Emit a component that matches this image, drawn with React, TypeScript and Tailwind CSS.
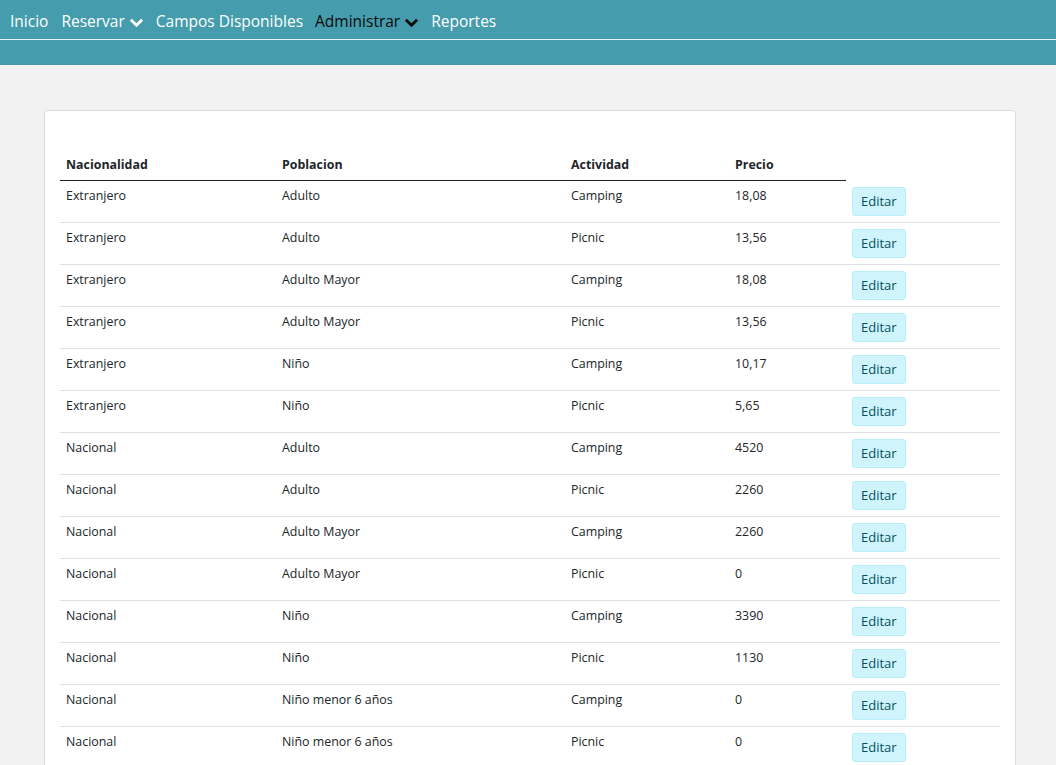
import React from "react";

const rows: [string, string, string, string][] = [
  ["Extranjero", "Adulto", "Camping", "18,08"],
  ["Extranjero", "Adulto", "Picnic", "13,56"],
  ["Extranjero", "Adulto Mayor", "Camping", "18,08"],
  ["Extranjero", "Adulto Mayor", "Picnic", "13,56"],
  ["Extranjero", "Niño", "Camping", "10,17"],
  ["Extranjero", "Niño", "Picnic", "5,65"],
  ["Nacional", "Adulto", "Camping", "4520"],
  ["Nacional", "Adulto", "Picnic", "2260"],
  ["Nacional", "Adulto Mayor", "Camping", "2260"],
  ["Nacional", "Adulto Mayor", "Picnic", "0"],
  ["Nacional", "Niño", "Camping", "3390"],
  ["Nacional", "Niño", "Picnic", "1130"],
  ["Nacional", "Niño menor 6 años", "Camping", "0"],
  ["Nacional", "Niño menor 6 años", "Picnic", "0"],
];

function Chevron() {
  return (
    <svg width="15" height="15" viewBox="0 0 16 16" className="ml-[4px] mt-[1px]">
      <path d="M2 5 L8 11 L14 5" fill="none" stroke="currentColor" strokeWidth="3" />
    </svg>
  );
}

export default function App() {
  return (
    <div className="min-h-[765px] bg-[#f2f2f2] text-[#212529]" style={{ fontFamily: '"Open Sans", sans-serif' }}>
      <div className="bg-[#449cac] h-[65px]">
        <nav className="flex items-center gap-[12px] h-[40px] pt-[4px] pl-[10px] pr-[10px] text-[15.5px] text-white border-b border-[#e6f3f5]">
          <span>Inicio</span>
          <span className="flex items-center ml-[1px]">Reservar<Chevron /></span>
          <span>Campos Disponibles</span>
          <span className="flex items-center text-[#0b0b0b]">Administrar<Chevron /></span>
          <span>Reportes</span>
        </nav>
      </div>
      <div className="pt-[45px] pl-[44px] pr-[40px]">
        <div className="bg-white border border-[#dcdcdc] rounded-[4px] px-[15px] pt-[37px] h-[700px]">
          <table className="w-full text-[12.4px] leading-[19px] border-collapse">
            <thead>
              <tr>
                <th className="text-left font-bold px-[6px] pt-[7px] pb-[6px] w-[216px] border-b border-[#222]">Nacionalidad</th>
                <th className="text-left font-bold px-[6px] pt-[7px] pb-[6px] w-[289px] border-b border-[#222]">Poblacion</th>
                <th className="text-left font-bold px-[6px] pt-[7px] pb-[6px] w-[164px] border-b border-[#222]">Actividad</th>
                <th className="text-left font-bold px-[6px] pt-[7px] pb-[6px] w-[117px] border-b border-[#222]">Precio</th>
                <th className="px-[6px]"></th>
              </tr>
            </thead>
            <tbody>
              {rows.map((r, i) => (
                <tr key={i} className="border-b border-[#dee2e6] h-[42px] align-top">
                  <td className="px-[6px] pt-[5px]">{r[0]}</td>
                  <td className="px-[6px] pt-[5px]">{r[1]}</td>
                  <td className="px-[6px] pt-[5px]">{r[2]}</td>
                  <td className="px-[6px] pt-[5px]">{r[3]}</td>
                  <td className="px-[6px] pt-[6px]">
                    <button className="bg-[#cff4fc] border border-[#b6effb] text-[#055160] rounded-[3px] px-[8px] h-[29px] text-[13px]">
                      Editar
                    </button>
                  </td>
                </tr>
              ))}
            </tbody>
          </table>
        </div>
      </div>
    </div>
  );
}
